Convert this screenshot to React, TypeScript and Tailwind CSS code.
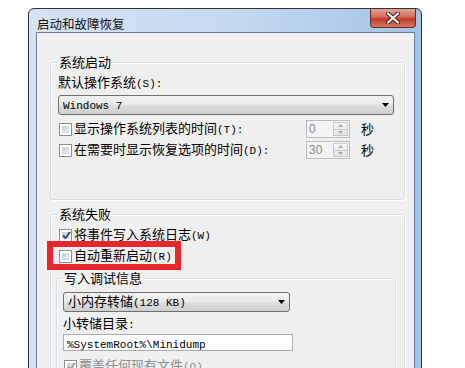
import React from 'react';

const L = ({ children }: { children: React.ReactNode }) => (
  <span className="font-['Liberation_Mono',monospace] text-[11px]">{children}</span>
);

const Checkbox = ({ checked = false, disabled = false }: { checked?: boolean; disabled?: boolean }) => (
  <div className="relative w-[13px] h-[13px] shrink-0 border border-[#8e8f8f] bg-white p-[2px]">
    <div className="w-full h-full bg-[linear-gradient(135deg,#c8ccd2,#f4f5f6)] border border-[#d4d7db]" />
    {checked && (
      <svg className="absolute left-[1px] top-[0px]" width="11" height="11" viewBox="0 0 11 11">
        <path
          d="M2 5.5 L4.5 8 L9 2"
          fill="none"
          stroke={disabled ? '#a0a0a0' : '#33488c'}
          strokeWidth="2"
        />
      </svg>
    )}
  </div>
);

const Combo = ({ text, w }: { text: React.ReactNode; w: string }) => (
  <div
    className={`${w} h-[20px] flex items-center justify-between pl-[4px] pr-[4px] border border-[#707070] rounded-[3px] bg-[linear-gradient(#f2f2f2,#ebebeb_45%,#dddddd_55%,#cfcfcf)]`}
  >
    <span className="leading-[16px]">{text}</span>
    <svg width="7" height="4" viewBox="0 0 7 4">
      <path d="M0 0 H7 L3.5 4 Z" fill="#000" />
    </svg>
  </div>
);

const Spin = ({ value }: { value: string }) => (
  <div className="w-[44px] h-[18px] flex border border-[#b9bcc0] bg-[#f4f4f4]">
    <div className="flex-1 pl-[2px] text-[#8a8a8a] font-['Liberation_Sans',sans-serif] text-[12px] leading-[16px]">
      {value}
    </div>
    <div className="w-[15px] my-[1px] mr-[1px] flex flex-col border border-[#c9cbcd] bg-[linear-gradient(#f6f6f6,#e4e4e4)]">
      <div className="flex-1 flex items-center justify-center border-b border-[#c9cbcd]">
        <svg width="5" height="3" viewBox="0 0 5 3">
          <path d="M0 3 L2.5 0 L5 3 Z" fill="#a8a8a8" />
        </svg>
      </div>
      <div className="flex-1 flex items-center justify-center">
        <svg width="5" height="3" viewBox="0 0 5 3">
          <path d="M0 0 L2.5 3 L5 0 Z" fill="#a8a8a8" />
        </svg>
      </div>
    </div>
  </div>
);

const CheckRow = ({
  label,
  checked,
  disabled,
  className = '',
}: {
  label: React.ReactNode;
  checked?: boolean;
  disabled?: boolean;
  className?: string;
}) => (
  <div className={`flex items-center h-[16px] pl-[1px] ${className}`}>
    <Checkbox checked={checked} disabled={disabled} />
    <span className={`ml-[2px] leading-[16px] ${disabled ? 'text-[#8d8d8d]' : ''}`}>{label}</span>
  </div>
);

export default function App() {
  return (
    <div className="relative w-[465px] h-[368px] overflow-hidden bg-white font-['Noto_Sans_CJK_SC',sans-serif] text-[13px] text-black">
      <div className="ml-[28px] mt-[8px] w-[394px] h-[400px] flex flex-col border border-[#2f343a] rounded-t-[6px] bg-[linear-gradient(90deg,#d6e4f4,#c4d8ef_55%,#a4c2e6)]">
        {/* title bar */}
        <div className="h-[29px] flex items-start justify-between">
          <div className="pl-[8px] pt-[7px] text-[12.5px] leading-[16px] text-[#111]">启动和故障恢复</div>
          <div className="mr-[5px] w-[46px] h-[19px] flex items-center justify-center rounded-b-[4px] border border-t-0 border-[#6b2a20] bg-[linear-gradient(#e4a595,#d26a55_45%,#c0392a_55%,#d67a62)]">
            <svg width="16" height="12" viewBox="0 0 16 12">
              <path d="M3 1.5 L13 10.5 M13 1.5 L3 10.5" stroke="#4a1a14" strokeWidth="4" strokeLinecap="round" />
              <path d="M3 1.5 L13 10.5 M13 1.5 L3 10.5" stroke="#ffffff" strokeWidth="2.2" strokeLinecap="round" />
            </svg>
          </div>
        </div>

        {/* client area */}
        <div className="flex-1 ml-[7px] mr-[6px] border border-[#6f7e90] bg-[#f0f0f0] pt-[22px] pl-[13px] pr-[9px]">
          <fieldset className="border border-[#d5dfe5] rounded-[3px] pl-[7px] pr-[10px] pb-[40px] shadow-[inset_1px_1px_0_#ffffff,1px_1px_0_#ffffff]">
            <legend className="px-[1px] leading-[14px]">系统启动</legend>
            <div className="mt-[5px] h-[16px] leading-[16px]">
              默认操作系统<L>(S):</L>
            </div>
            <div className="mt-[5px]">
              <Combo w="w-full" text={<L>Windows 7</L>} />
            </div>
            <div className="mt-[5px] flex items-center h-[18px]">
              <div className="w-[248px]">
                <CheckRow label={<>显示操作系统列表的时间<L>(T):</L></>} />
              </div>
              <Spin value="0" />
              <span className="ml-[11px] leading-[16px]">秒</span>
            </div>
            <div className="mt-[3px] flex items-center h-[18px]">
              <div className="w-[248px]">
                <CheckRow label={<>在需要时显示恢复选项的时间<L>(D):</L></>} />
              </div>
              <Spin value="30" />
              <span className="ml-[11px] leading-[16px]">秒</span>
            </div>
          </fieldset>

          <fieldset className="mt-[7px] border border-[#d5dfe5] rounded-[3px] pl-[7px] pr-[10px] pb-[20px] shadow-[inset_1px_1px_0_#ffffff,1px_1px_0_#ffffff]">
            <legend className="px-[1px] leading-[14px]">系统失败</legend>
            <CheckRow className="mt-[6px]" checked label={<>将事件写入系统日志<L>(W)</L></>} />
            <CheckRow className="mt-[5px]" label={<>自动重新启动<L>(R)</L></>} />

            <fieldset className="mt-[7px] -ml-[2px] -mr-[2px] border border-[#d5dfe5] rounded-[3px] pl-[6px] pb-[20px] shadow-[inset_1px_1px_0_#ffffff,1px_1px_0_#ffffff]">
              <legend className="px-[1px] leading-[14px]">写入调试信息</legend>
              <div className="mt-[7px]">
                <Combo w="w-[227px]" text={<>小内存转储<L>(128 KB)</L></>} />
              </div>
              <div className="mt-[3px] h-[16px] leading-[16px]">
                小转储目录<L>:</L>
              </div>
              <div className="mt-[3px] w-[230px] h-[17px] border border-[#abadb3] bg-white pl-[3px] leading-[15px]">
                <L>%SystemRoot%\Minidump</L>
              </div>
              <CheckRow className="mt-[7px]" checked disabled label={<>覆盖任何现有文件<L>(O)</L></>} />
            </fieldset>
          </fieldset>
        </div>
      </div>

      {/* annotation highlight */}
      <div className="absolute left-[47px] top-[241px] w-[134px] h-[29px] border-[6px] border-[#e8262b]" />
    </div>
  );
}
